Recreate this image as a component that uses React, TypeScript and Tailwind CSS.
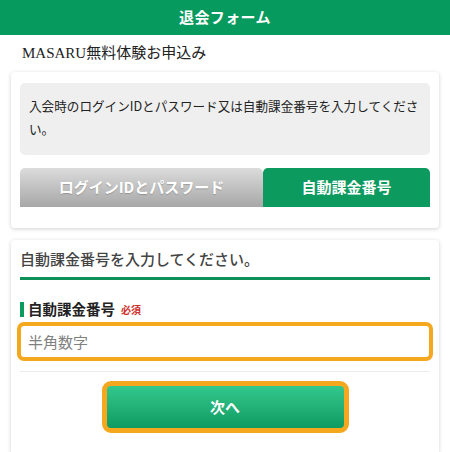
export default function App() {
  const jp = { fontFamily: '"Noto Sans CJK JP", "Noto Sans", sans-serif' };
  return (
    <div className="min-h-[452px] bg-white" style={jp}>
      {/* header */}
      <div className="flex h-[35px] items-center justify-center bg-[#079a5f]">
        <h1 className="text-[15px] font-bold tracking-wide text-white">退会フォーム</h1>
      </div>

      <p
        className="ml-[22px] mt-[7px] text-[15px] leading-[22px] text-[#222]"
        style={{ fontFamily: '"Liberation Serif", "Noto Sans CJK JP", serif' }}
      >
        MASARU無料体験お申込み
      </p>

      {/* card 1 */}
      <div className="mx-[11px] mt-[8px] rounded-[4px] bg-white px-[9px] pb-[21px] pt-[11px] shadow-[0_1px_4px_rgba(0,0,0,0.18)]">
        <div className="rounded-[5px] bg-[#efefef] px-[9px] pb-[15px] pt-[11px] text-[12.6px] leading-[23px] text-[#222]">
          入会時のログインIDとパスワード又は自動課金番号を入力してください。
        </div>
        <div className="mt-[13px] flex h-[39px]">
          <button className="flex w-[243px] items-center justify-center rounded-t-[5px] bg-gradient-to-b from-[#dcdcdc] to-[#a7a7a7] text-[15px] font-bold text-white [text-shadow:0_1px_1px_rgba(0,0,0,0.2)]">
            ログインIDとパスワード
          </button>
          <button className="flex flex-1 items-center justify-center rounded-t-[5px] bg-[#0d9a5f] text-[15px] font-bold text-white">
            自動課金番号
          </button>
        </div>
      </div>

      {/* card 2 */}
      <div className="mx-[11px] mt-[12px] rounded-t-[4px] bg-white px-[9px] pb-[20px] pt-[8px] shadow-[0_1px_4px_rgba(0,0,0,0.18)]">
        <h2 className="border-b-[3px] border-[#0d8f58] pb-[7px] text-[15px] font-medium leading-[22px] text-[#444]">
          自動課金番号を入力してください。
        </h2>
        <div className="mt-[20px] flex items-center">
          <span className="mr-[4px] h-[15px] w-[4px] bg-[#0d9a5f]" />
          <span className="text-[14.5px] font-bold leading-[18px] text-[#222]">自動課金番号</span>
          <span className="ml-[6px] text-[10px] font-bold text-[#d0312d]">必須</span>
        </div>
        <input
          placeholder="半角数字"
          className="-mx-[3px] mt-[4px] box-border h-[39px] w-[calc(100%+6px)] rounded-[7px] border-[4px] border-[#f5a81e] bg-white px-[7px] text-[15px] text-[#333] outline-none placeholder:text-[#808080]"
        />
        <div className="mt-[10px] border-t border-[#ececec]" />
        <div className="mt-[9px] flex justify-center">
          <button className="h-[52px] w-[247px] rounded-[9px] border-[5px] border-[#f5a81e] bg-gradient-to-b from-[#33c88e] to-[#0d9b61] text-[15px] font-bold text-white">
            次へ
          </button>
        </div>
      </div>
    </div>
  );
}
